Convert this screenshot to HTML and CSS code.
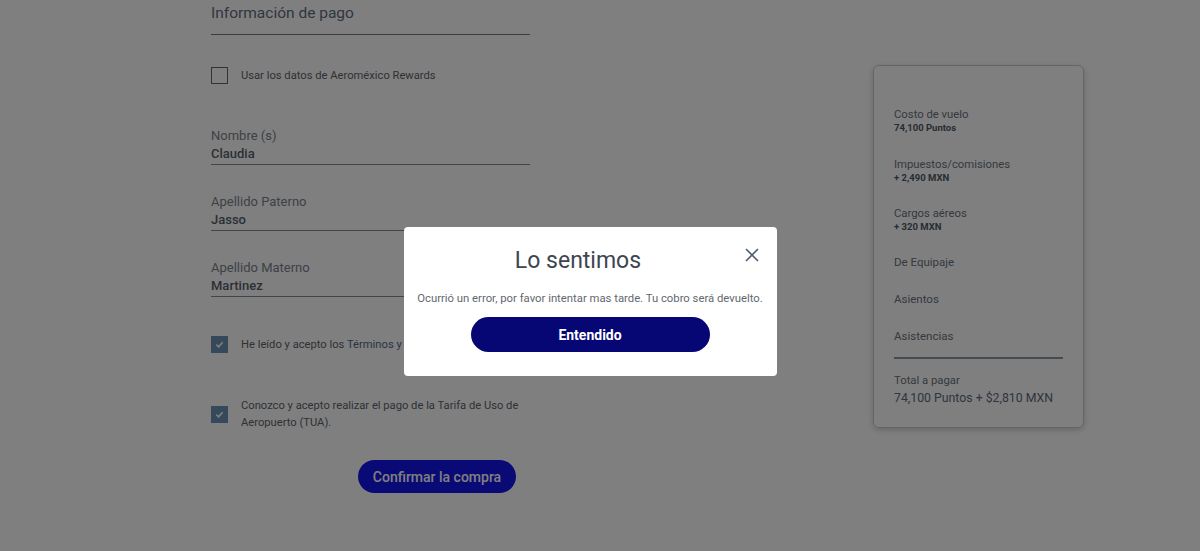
FILE: index.html
```html
<!DOCTYPE html>
<html lang="es">
  <head>
    <meta charset="UTF-8" />
    <meta name="viewport" content="width=device-width, initial-scale=1.0" />
    <title>Información de pago</title>
    <link rel="stylesheet" href="styles.css">
  </head>
  <body>
    <div class="page">
      <form class="payment-form">
        <h2 class="section-title">Información de pago</h2>

        <label class="check-row rewards">
          <span class="checkbox"></span>
          <span>Usar los datos de Aeroméxico Rewards</span>
        </label>

        <div class="field first">
          <div class="field-label">Nombre (s)</div>
          <div class="field-value">Claudia</div>
        </div>
        <div class="field">
          <div class="field-label">Apellido Paterno</div>
          <div class="field-value">Jasso</div>
        </div>
        <div class="field">
          <div class="field-label">Apellido Materno</div>
          <div class="field-value">Martinez</div>
        </div>

        <label class="check-row terms">
          <span class="checkbox checked">
            <svg viewBox="0 0 10 10" width="9" height="9"><path d="M1.5 5.2 L4 7.5 L8.5 2.5" fill="none" stroke="#fff" stroke-width="1.8"/></svg>
          </span>
          <span>He leído y acepto los <a href="#">Términos y Condiciones</a></span>
        </label>

        <label class="check-row tua">
          <span class="checkbox checked">
            <svg viewBox="0 0 10 10" width="9" height="9"><path d="M1.5 5.2 L4 7.5 L8.5 2.5" fill="none" stroke="#fff" stroke-width="1.8"/></svg>
          </span>
          <span>Conozco y acepto realizar el pago de la Tarifa de Uso de Aeropuerto (TUA).</span>
        </label>

        <div class="form-actions">
          <button type="button" class="confirm-btn">Confirmar la compra</button>
        </div>
      </form>

      <aside class="summary">
        <div class="summary-item">
          <div class="summary-label">Costo de vuelo</div>
          <div class="summary-value">74,100 Puntos</div>
        </div>
        <div class="summary-item">
          <div class="summary-label">Impuestos/comisiones</div>
          <div class="summary-value">+ 2,490 MXN</div>
        </div>
        <div class="summary-item">
          <div class="summary-label">Cargos aéreos</div>
          <div class="summary-value">+ 320 MXN</div>
        </div>
        <div class="summary-item single">De Equipaje</div>
        <div class="summary-item single">Asientos</div>
        <div class="summary-item single">Asistencias</div>
        <div class="summary-total">
          <div class="summary-label">Total a pagar</div>
          <div class="total-value">74,100 Puntos + $2,810 MXN</div>
        </div>
      </aside>
    </div>

    <div class="backdrop">
      <div class="modal">
        <button class="modal-close" type="button">
          <svg viewBox="0 0 14 14" width="14" height="14"><path d="M1 1 L13 13 M13 1 L1 13" stroke="#4d5b69" stroke-width="1.6" fill="none"/></svg>
        </button>
        <h3 class="modal-title">Lo sentimos</h3>
        <p class="modal-text">Ocurrió un error, por favor intentar mas tarde. Tu cobro será devuelto.</p>
        <button class="modal-btn" type="button">Entendido</button>
      </div>
    </div>
  </body>
</html>
```

FILE: styles.css
```css
body {
  margin: 0;
  background: #ffffff;
  font-family: Roboto, "Liberation Sans", sans-serif;
  color: #5f6b78;
}

.page {
  display: flex;
  justify-content: space-between;
  width: 873px;
  margin-left: 211px;
}

.payment-form {
  width: 319px;
}

.section-title {
  margin: 0;
  padding-top: 4px;
  height: 35px;
  font-size: 15.5px;
  font-weight: 400;
  color: #5f6e80;
  border-bottom: 1px solid #6c7a8a;
  box-sizing: border-box;
}

.check-row {
  display: flex;
  align-items: center;
  gap: 13px;
  font-size: 11.2px;
  color: #5d636b;
}

.check-row a {
  color: #4a6a8c;
  text-decoration: none;
}

.checkbox {
  flex: none;
  width: 17px;
  height: 17px;
  border: 1px solid #5d6875;
  box-sizing: border-box;
  display: flex;
  align-items: center;
  justify-content: center;
}

.checkbox.checked {
  background: #6a93b5;
  border-color: #6a93b5;
}

.rewards {
  margin-top: 32px;
}

.field {
  margin-top: 28px;
  padding-bottom: 1px;
  border-bottom: 1px solid #808a94;
}

.field.first {
  margin-top: 43px;
}

.field-label {
  font-size: 13px;
  line-height: 18px;
  color: #7a838d;
}

.field-value {
  font-size: 13px;
  line-height: 18px;
  font-weight: 500;
  color: #56606c;
}

.terms {
  margin-top: 39px;
  white-space: nowrap;
}

.tua {
  margin-top: 44px;
  line-height: 17px;
}

.form-actions {
  display: flex;
  justify-content: flex-end;
  padding-right: 14px;
  margin-top: 29px;
}

.confirm-btn {
  width: 158px;
  height: 33px;
  border: none;
  border-radius: 17px;
  background: #1414ee;
  color: #ffffff;
  font-family: inherit;
  font-size: 14px;
  font-weight: 500;
}

.summary {
  margin-top: 65px;
  width: 211px;
  height: 363px;
  box-sizing: border-box;
  border: 1px solid #c4ccd4;
  border-radius: 6px;
  box-shadow: 0 2px 6px rgba(0, 0, 0, 0.2);
  padding: 41px 20px 0;
}

.summary-item {
  margin-bottom: 22px;
}

.summary-item.single {
  margin-bottom: 24px;
  font-size: 11.5px;
  line-height: 13px;
  color: #6a737d;
}

.summary-label {
  font-size: 11.3px;
  line-height: 15px;
  color: #6a737d;
}

.summary-value {
  font-size: 9.5px;
  line-height: 12.6px;
  font-weight: 700;
  color: #4f5966;
}

.summary-total {
  margin-top: -10px;
  border-top: 2px solid #8896a6;
  padding-top: 14px;
}

.total-value {
  margin-top: 3px;
  font-size: 12.3px;
  color: #5d6a7a;
}

/* dimmed layer behind the dialog */
.backdrop {
  position: fixed;
  inset: 0;
  background: rgba(0, 0, 0, 0.5);
  display: flex;
  align-items: flex-start;
  justify-content: center;
}

.modal {
  position: relative;
  margin-top: 227px;
  margin-left: -20px;
  width: 373px;
  height: 149px;
  box-sizing: border-box;
  background: #ffffff;
  border-radius: 4px;
  display: flex;
  flex-direction: column;
  align-items: center;
  padding-top: 18px;
}

.modal-close {
  position: absolute;
  top: 21px;
  right: 18px;
  border: none;
  background: none;
  padding: 0;
  display: flex;
}

.modal-title {
  margin: 0 24px 0 0;
  font-size: 23px;
  font-weight: 400;
  line-height: 32px;
  color: #3d4650;
}

.modal-text {
  margin: 15px 0 0;
  font-size: 11.3px;
  line-height: 14px;
  color: #5f6770;
}

.modal-btn {
  margin-top: 11px;
  width: 239px;
  height: 35px;
  border: none;
  border-radius: 18px;
  background: #060674;
  color: #ffffff;
  font-family: inherit;
  font-size: 14px;
  font-weight: 700;
}
```
